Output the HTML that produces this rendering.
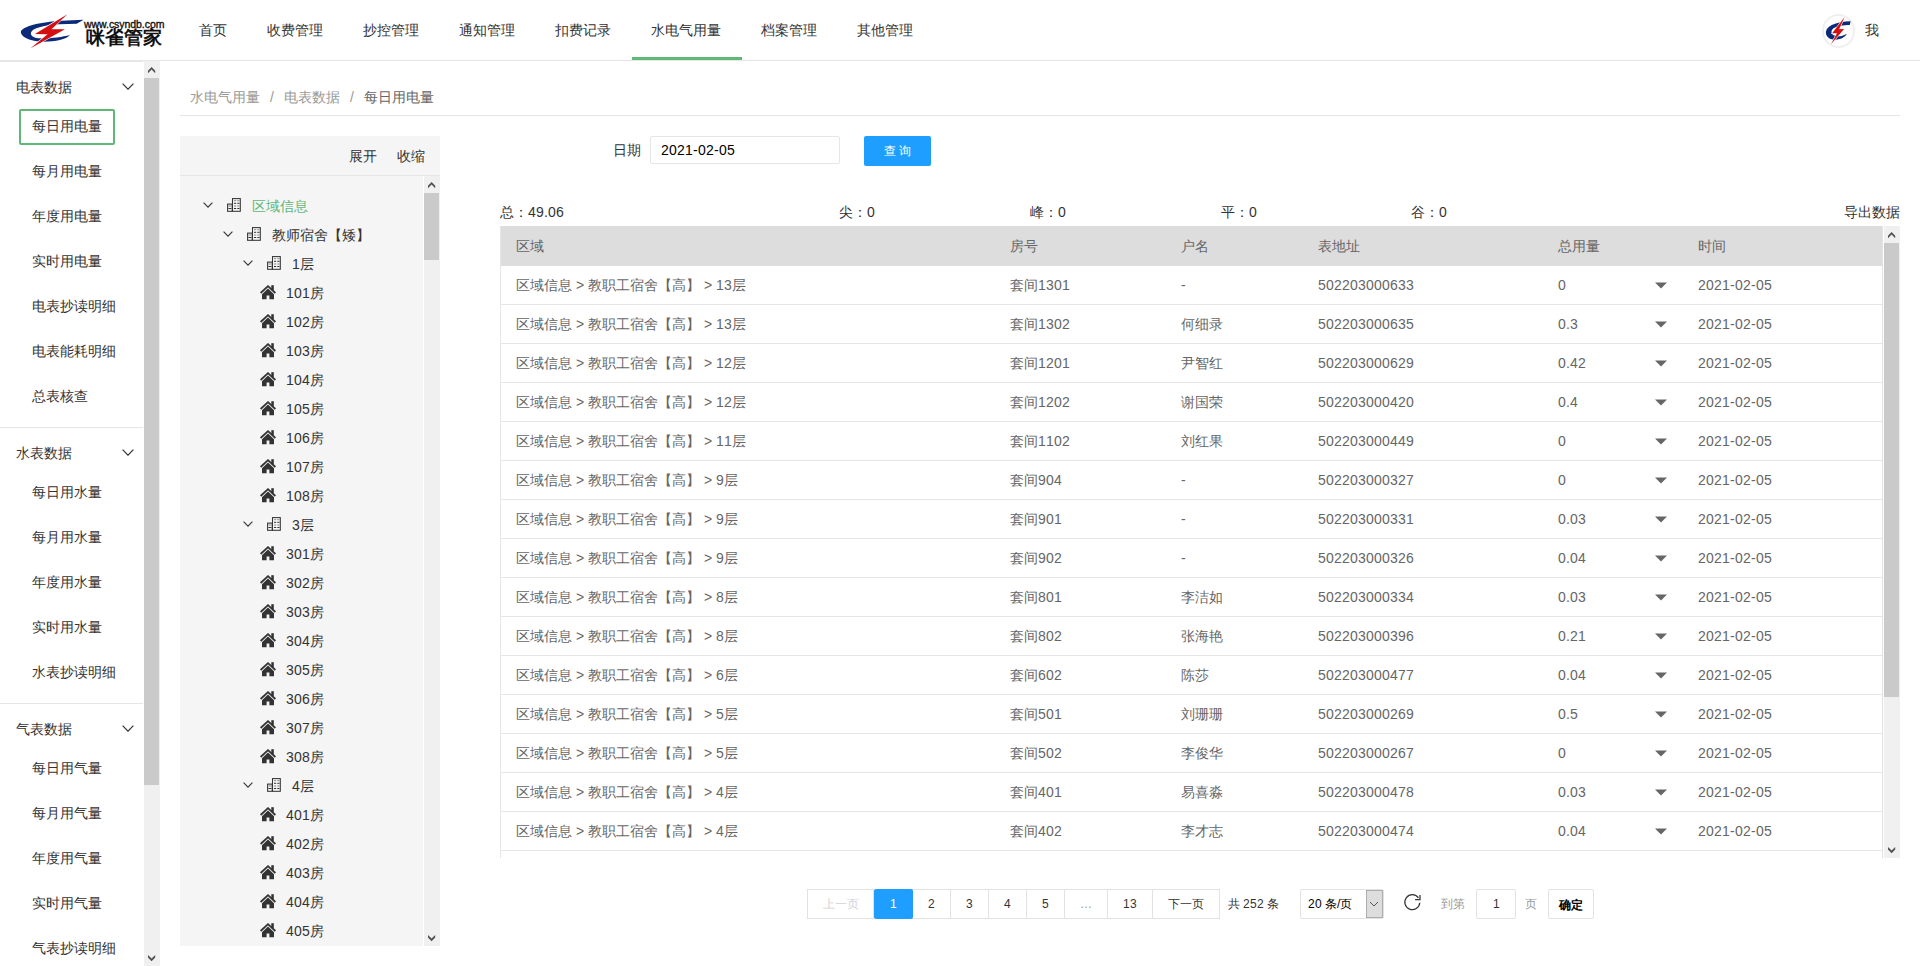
<!DOCTYPE html><html><head><meta charset="utf-8"><title>每日用电量</title><style>
*{margin:0;padding:0;box-sizing:border-box}
html,body{width:1920px;height:966px;overflow:hidden;background:#fff;font-family:"Liberation Sans",sans-serif;font-size:14px;color:#333}
.abs{position:absolute}
.t{position:absolute;white-space:nowrap;line-height:20px;height:20px}
.t i{font-style:normal;display:inline-block;text-align:left}
.t i.k{width:1em;text-align:center}
.sb{position:absolute;background:#f0f0f0}
.thumb{position:absolute;background:#cacaca}
.hl{position:absolute;height:1px;background:#e6e6e6}
.pg{position:absolute;top:889px;height:30px;border:1px solid #e2e2e2;background:#fff}
</style></head><body>
<svg class="abs" style="left:18px;top:10px" width="70" height="42" viewBox="0 0 1610 966">
<path d="M1510 222 L1000 245 C600 268 150 350 72 480 C30 600 250 722 560 728 C850 732 1100 680 1198 575 C1000 625 700 665 470 652 C260 625 235 495 420 420 C600 355 800 335 950 330 L1350 318 Z" fill="#0b2a7a"/>
<path d="M1135 95 L770 440 L1080 440 L290 880 L680 558 L390 552 Z" fill="#d40f12" stroke="#fff" stroke-width="28"/>
<path d="M1135 95 L770 440 L1080 440 L290 880 L680 558 L390 552 Z" fill="#d40f12"/>
</svg>
<div class="t" style="left:84px;top:18px;font-size:10.5px;line-height:12px;height:12px;color:#111;letter-spacing:-0.05px;-webkit-text-stroke:0.35px #111">www.csyndb.com</div>
<div class=t style="left:86px;top:27px;font-size:19px;line-height:22px;height:22px;color:#111;font-weight:bold"><i class=k>咪</i><i class=k>雀</i><i class=k>管</i><i class=k>家</i></div>
<div class=t style="left:199px;top:20px"><i class=k>首</i><i class=k>页</i></div>
<div class=t style="left:267px;top:20px"><i class=k>收</i><i class=k>费</i><i class=k>管</i><i class=k>理</i></div>
<div class=t style="left:363px;top:20px"><i class=k>抄</i><i class=k>控</i><i class=k>管</i><i class=k>理</i></div>
<div class=t style="left:459px;top:20px"><i class=k>通</i><i class=k>知</i><i class=k>管</i><i class=k>理</i></div>
<div class=t style="left:555px;top:20px"><i class=k>扣</i><i class=k>费</i><i class=k>记</i><i class=k>录</i></div>
<div class=t style="left:651px;top:20px"><i class=k>水</i><i class=k>电</i><i class=k>气</i><i class=k>用</i><i class=k>量</i></div>
<div class=t style="left:761px;top:20px"><i class=k>档</i><i class=k>案</i><i class=k>管</i><i class=k>理</i></div>
<div class=t style="left:857px;top:20px"><i class=k>其</i><i class=k>他</i><i class=k>管</i><i class=k>理</i></div>
<div class="abs" style="left:632px;top:57px;width:110px;height:3px;background:#5FB878"></div>
<div class="hl" style="left:0;top:60px;width:1920px"></div>
<div class="abs" style="left:1821.6px;top:14.3px;width:33px;height:33.4px;border-radius:50%;border:2px solid #efefef;background:#fff"></div>
<svg class="abs" style="left:1810px;top:5px" width="90" height="50" viewBox="0 0 1739 966">
<path d="M785 312 C650 316 520 340 420 388 C285 452 275 585 370 642 C455 692 625 682 708 572 L700 558 C630 603 545 613 485 596 C405 572 392 498 455 448 C528 398 650 388 768 384 Z" fill="#0b2a7a"/>
<path d="M670 232 L562 468 L658 462 L405 758 L522 548 L428 548 Z" fill="#d40f12" stroke="#fff" stroke-width="22"/>
<path d="M670 232 L562 468 L658 462 L405 758 L522 548 L428 548 Z" fill="#d40f12"/>
</svg>
<div class=t style="left:1865px;top:20px"><i class=k>我</i></div>
<div class=t style="left:16px;top:77px"><i class=k>电</i><i class=k>表</i><i class=k>数</i><i class=k>据</i></div>
<svg class="abs" style="left:122px;top:83px" width="12" height="7" viewBox="0 0 12 7"><path d="M0.6 0.6 L6.0 6.2 L11.4 0.6" fill="none" stroke="#333" stroke-width="1.2"/></svg>
<div class=t style="left:32px;top:116px"><i class=k>每</i><i class=k>日</i><i class=k>用</i><i class=k>电</i><i class=k>量</i></div>
<div class=t style="left:32px;top:161px"><i class=k>每</i><i class=k>月</i><i class=k>用</i><i class=k>电</i><i class=k>量</i></div>
<div class=t style="left:32px;top:206px"><i class=k>年</i><i class=k>度</i><i class=k>用</i><i class=k>电</i><i class=k>量</i></div>
<div class=t style="left:32px;top:251px"><i class=k>实</i><i class=k>时</i><i class=k>用</i><i class=k>电</i><i class=k>量</i></div>
<div class=t style="left:32px;top:296px"><i class=k>电</i><i class=k>表</i><i class=k>抄</i><i class=k>读</i><i class=k>明</i><i class=k>细</i></div>
<div class=t style="left:32px;top:341px"><i class=k>电</i><i class=k>表</i><i class=k>能</i><i class=k>耗</i><i class=k>明</i><i class=k>细</i></div>
<div class=t style="left:32px;top:386px"><i class=k>总</i><i class=k>表</i><i class=k>核</i><i class=k>查</i></div>
<div class=t style="left:16px;top:443px"><i class=k>水</i><i class=k>表</i><i class=k>数</i><i class=k>据</i></div>
<svg class="abs" style="left:122px;top:449px" width="12" height="7" viewBox="0 0 12 7"><path d="M0.6 0.6 L6.0 6.2 L11.4 0.6" fill="none" stroke="#333" stroke-width="1.2"/></svg>
<div class=t style="left:32px;top:482px"><i class=k>每</i><i class=k>日</i><i class=k>用</i><i class=k>水</i><i class=k>量</i></div>
<div class=t style="left:32px;top:527px"><i class=k>每</i><i class=k>月</i><i class=k>用</i><i class=k>水</i><i class=k>量</i></div>
<div class=t style="left:32px;top:572px"><i class=k>年</i><i class=k>度</i><i class=k>用</i><i class=k>水</i><i class=k>量</i></div>
<div class=t style="left:32px;top:617px"><i class=k>实</i><i class=k>时</i><i class=k>用</i><i class=k>水</i><i class=k>量</i></div>
<div class=t style="left:32px;top:662px"><i class=k>水</i><i class=k>表</i><i class=k>抄</i><i class=k>读</i><i class=k>明</i><i class=k>细</i></div>
<div class=t style="left:16px;top:719px"><i class=k>气</i><i class=k>表</i><i class=k>数</i><i class=k>据</i></div>
<svg class="abs" style="left:122px;top:725px" width="12" height="7" viewBox="0 0 12 7"><path d="M0.6 0.6 L6.0 6.2 L11.4 0.6" fill="none" stroke="#333" stroke-width="1.2"/></svg>
<div class=t style="left:32px;top:758px"><i class=k>每</i><i class=k>日</i><i class=k>用</i><i class=k>气</i><i class=k>量</i></div>
<div class=t style="left:32px;top:803px"><i class=k>每</i><i class=k>月</i><i class=k>用</i><i class=k>气</i><i class=k>量</i></div>
<div class=t style="left:32px;top:848px"><i class=k>年</i><i class=k>度</i><i class=k>用</i><i class=k>气</i><i class=k>量</i></div>
<div class=t style="left:32px;top:893px"><i class=k>实</i><i class=k>时</i><i class=k>用</i><i class=k>气</i><i class=k>量</i></div>
<div class=t style="left:32px;top:938px"><i class=k>气</i><i class=k>表</i><i class=k>抄</i><i class=k>读</i><i class=k>明</i><i class=k>细</i></div>
<div class="hl" style="left:0;top:427px;width:143px"></div>
<div class="hl" style="left:0;top:703px;width:143px"></div>
<div class="abs" style="left:19px;top:109px;width:96px;height:36px;border:2px solid #5FB878;border-radius:2px"></div>
<div class="sb" style="left:144px;top:61px;width:16px;height:905px"></div>
<div class="thumb" style="left:144px;top:78px;width:15px;height:707px"></div>
<svg class="abs" style="left:147.8px;top:66.8px" width="8" height="7" viewBox="0 0 8 7"><path d="M0 3.7 L3.6 0 L7.2 3.7 L7.2 6.2 L3.6 2.6 L0 6.2 Z" fill="#505050"/></svg>
<svg class="abs" style="left:147.6px;top:955.2px" width="8" height="7" viewBox="0 0 8 7"><path d="M0 0 L3.6 3.6 L7.2 0 L7.2 2.5 L3.6 6.2 L0 2.5 Z" fill="#505050"/></svg>
<div class="hl" style="left:0;top:61px;width:143px"></div>
<div class=t style="left:190px;top:87px;color:#999"><i class=k>水</i><i class=k>电</i><i class=k>气</i><i class=k>用</i><i class=k>量</i></div>
<div class=t style="left:270px;top:87px;color:#999"><i style="width:4px">/</i></div>
<div class=t style="left:284px;top:87px;color:#999"><i class=k>电</i><i class=k>表</i><i class=k>数</i><i class=k>据</i></div>
<div class=t style="left:350px;top:87px;color:#999"><i style="width:4px">/</i></div>
<div class=t style="left:364px;top:87px;color:#666"><i class=k>每</i><i class=k>日</i><i class=k>用</i><i class=k>电</i><i class=k>量</i></div>
<div class="hl" style="left:180px;top:115px;width:1720px"></div>
<div class="abs" style="left:180px;top:136px;width:260px;height:810px;background:#f5f5f5"></div>
<div class=t style="left:349px;top:146px"><i class=k>展</i><i class=k>开</i></div>
<div class=t style="left:397px;top:146px"><i class=k>收</i><i class=k>缩</i></div>
<div class="hl" style="left:180px;top:175px;width:260px"></div>
<div class="sb" style="left:424px;top:176px;width:16px;height:770px"></div>
<div class="abs" style="left:423px;top:176px;width:1px;height:770px;background:#fff"></div>
<div class="thumb" style="left:424px;top:193px;width:15px;height:67px"></div>
<svg class="abs" style="left:427.8px;top:181.8px" width="8" height="7" viewBox="0 0 8 7"><path d="M0 3.7 L3.6 0 L7.2 3.7 L7.2 6.2 L3.6 2.6 L0 6.2 Z" fill="#505050"/></svg>
<svg class="abs" style="left:427.6px;top:935.2px" width="8" height="7" viewBox="0 0 8 7"><path d="M0 0 L3.6 3.6 L7.2 0 L7.2 2.5 L3.6 6.2 L0 2.5 Z" fill="#505050"/></svg>
<svg class="abs" style="left:203px;top:202px" width="10" height="6" viewBox="0 0 10 6"><path d="M0.6 0.6 L5.0 5.2 L9.4 0.6" fill="none" stroke="#333" stroke-width="1.1"/></svg>
<svg class="abs" style="left:227px;top:198px" width="15" height="15" viewBox="0 0 15 15"><g fill="none" stroke="#333" stroke-width="1.05"><rect x="0.6" y="6.1" width="4.6" height="7.2"/><rect x="5.5" y="0.6" width="7.8" height="12.7"/></g><g stroke="#333" stroke-width="1"><path d="M7 5.3 h2.2 M10.3 5.3 h2.2 M7 10.5 h2.2 M10.3 10.5 h2.2 M1.4 10.5 h3"/></g><g stroke="#8a8a8a" stroke-width="1"><path d="M7 2.7 h2.2 M10.3 2.7 h2.2 M7 8 h2.2 M10.3 8 h2.2 M1.4 8 h3"/></g></svg>
<div class=t style="left:252px;top:196px;color:#5FB878"><i class=k>区</i><i class=k>域</i><i class=k>信</i><i class=k>息</i></div>
<svg class="abs" style="left:223px;top:231px" width="10" height="6" viewBox="0 0 10 6"><path d="M0.6 0.6 L5.0 5.2 L9.4 0.6" fill="none" stroke="#333" stroke-width="1.1"/></svg>
<svg class="abs" style="left:247px;top:227px" width="15" height="15" viewBox="0 0 15 15"><g fill="none" stroke="#333" stroke-width="1.05"><rect x="0.6" y="6.1" width="4.6" height="7.2"/><rect x="5.5" y="0.6" width="7.8" height="12.7"/></g><g stroke="#333" stroke-width="1"><path d="M7 5.3 h2.2 M10.3 5.3 h2.2 M7 10.5 h2.2 M10.3 10.5 h2.2 M1.4 10.5 h3"/></g><g stroke="#8a8a8a" stroke-width="1"><path d="M7 2.7 h2.2 M10.3 2.7 h2.2 M7 8 h2.2 M10.3 8 h2.2 M1.4 8 h3"/></g></svg>
<div class=t style="left:272px;top:225px"><i class=k>教</i><i class=k>师</i><i class=k>宿</i><i class=k>舍</i><i class=k>【</i><i class=k>矮</i><i class=k>】</i></div>
<svg class="abs" style="left:243px;top:260px" width="10" height="6" viewBox="0 0 10 6"><path d="M0.6 0.6 L5.0 5.2 L9.4 0.6" fill="none" stroke="#333" stroke-width="1.1"/></svg>
<svg class="abs" style="left:267px;top:256px" width="15" height="15" viewBox="0 0 15 15"><g fill="none" stroke="#333" stroke-width="1.05"><rect x="0.6" y="6.1" width="4.6" height="7.2"/><rect x="5.5" y="0.6" width="7.8" height="12.7"/></g><g stroke="#333" stroke-width="1"><path d="M7 5.3 h2.2 M10.3 5.3 h2.2 M7 10.5 h2.2 M10.3 10.5 h2.2 M1.4 10.5 h3"/></g><g stroke="#8a8a8a" stroke-width="1"><path d="M7 2.7 h2.2 M10.3 2.7 h2.2 M7 8 h2.2 M10.3 8 h2.2 M1.4 8 h3"/></g></svg>
<div class=t style="left:292px;top:254px"><i style="width:8px">1</i><i class=k>层</i></div>
<svg class="abs" style="left:260px;top:285px" width="16" height="15" viewBox="0 0 16 15"><path d="M0.6 8 L8 1.2 L15.4 8" fill="none" stroke="#333" stroke-width="1.8"/><rect x="11.3" y="0.2" width="2.5" height="5" fill="#333"/><path d="M2 9.2 L8 3.6 L14 9.2 L14 14.2 L9.4 14.2 L9.4 10.5 L6.6 10.5 L6.6 14.2 L2 14.2 Z" fill="#333"/></svg>
<div class=t style="left:286px;top:283px"><i style="width:8px">1</i><i style="width:8px">0</i><i style="width:8px">1</i><i class=k>房</i></div>
<svg class="abs" style="left:260px;top:314px" width="16" height="15" viewBox="0 0 16 15"><path d="M0.6 8 L8 1.2 L15.4 8" fill="none" stroke="#333" stroke-width="1.8"/><rect x="11.3" y="0.2" width="2.5" height="5" fill="#333"/><path d="M2 9.2 L8 3.6 L14 9.2 L14 14.2 L9.4 14.2 L9.4 10.5 L6.6 10.5 L6.6 14.2 L2 14.2 Z" fill="#333"/></svg>
<div class=t style="left:286px;top:312px"><i style="width:8px">1</i><i style="width:8px">0</i><i style="width:8px">2</i><i class=k>房</i></div>
<svg class="abs" style="left:260px;top:343px" width="16" height="15" viewBox="0 0 16 15"><path d="M0.6 8 L8 1.2 L15.4 8" fill="none" stroke="#333" stroke-width="1.8"/><rect x="11.3" y="0.2" width="2.5" height="5" fill="#333"/><path d="M2 9.2 L8 3.6 L14 9.2 L14 14.2 L9.4 14.2 L9.4 10.5 L6.6 10.5 L6.6 14.2 L2 14.2 Z" fill="#333"/></svg>
<div class=t style="left:286px;top:341px"><i style="width:8px">1</i><i style="width:8px">0</i><i style="width:8px">3</i><i class=k>房</i></div>
<svg class="abs" style="left:260px;top:372px" width="16" height="15" viewBox="0 0 16 15"><path d="M0.6 8 L8 1.2 L15.4 8" fill="none" stroke="#333" stroke-width="1.8"/><rect x="11.3" y="0.2" width="2.5" height="5" fill="#333"/><path d="M2 9.2 L8 3.6 L14 9.2 L14 14.2 L9.4 14.2 L9.4 10.5 L6.6 10.5 L6.6 14.2 L2 14.2 Z" fill="#333"/></svg>
<div class=t style="left:286px;top:370px"><i style="width:8px">1</i><i style="width:8px">0</i><i style="width:8px">4</i><i class=k>房</i></div>
<svg class="abs" style="left:260px;top:401px" width="16" height="15" viewBox="0 0 16 15"><path d="M0.6 8 L8 1.2 L15.4 8" fill="none" stroke="#333" stroke-width="1.8"/><rect x="11.3" y="0.2" width="2.5" height="5" fill="#333"/><path d="M2 9.2 L8 3.6 L14 9.2 L14 14.2 L9.4 14.2 L9.4 10.5 L6.6 10.5 L6.6 14.2 L2 14.2 Z" fill="#333"/></svg>
<div class=t style="left:286px;top:399px"><i style="width:8px">1</i><i style="width:8px">0</i><i style="width:8px">5</i><i class=k>房</i></div>
<svg class="abs" style="left:260px;top:430px" width="16" height="15" viewBox="0 0 16 15"><path d="M0.6 8 L8 1.2 L15.4 8" fill="none" stroke="#333" stroke-width="1.8"/><rect x="11.3" y="0.2" width="2.5" height="5" fill="#333"/><path d="M2 9.2 L8 3.6 L14 9.2 L14 14.2 L9.4 14.2 L9.4 10.5 L6.6 10.5 L6.6 14.2 L2 14.2 Z" fill="#333"/></svg>
<div class=t style="left:286px;top:428px"><i style="width:8px">1</i><i style="width:8px">0</i><i style="width:8px">6</i><i class=k>房</i></div>
<svg class="abs" style="left:260px;top:459px" width="16" height="15" viewBox="0 0 16 15"><path d="M0.6 8 L8 1.2 L15.4 8" fill="none" stroke="#333" stroke-width="1.8"/><rect x="11.3" y="0.2" width="2.5" height="5" fill="#333"/><path d="M2 9.2 L8 3.6 L14 9.2 L14 14.2 L9.4 14.2 L9.4 10.5 L6.6 10.5 L6.6 14.2 L2 14.2 Z" fill="#333"/></svg>
<div class=t style="left:286px;top:457px"><i style="width:8px">1</i><i style="width:8px">0</i><i style="width:8px">7</i><i class=k>房</i></div>
<svg class="abs" style="left:260px;top:488px" width="16" height="15" viewBox="0 0 16 15"><path d="M0.6 8 L8 1.2 L15.4 8" fill="none" stroke="#333" stroke-width="1.8"/><rect x="11.3" y="0.2" width="2.5" height="5" fill="#333"/><path d="M2 9.2 L8 3.6 L14 9.2 L14 14.2 L9.4 14.2 L9.4 10.5 L6.6 10.5 L6.6 14.2 L2 14.2 Z" fill="#333"/></svg>
<div class=t style="left:286px;top:486px"><i style="width:8px">1</i><i style="width:8px">0</i><i style="width:8px">8</i><i class=k>房</i></div>
<svg class="abs" style="left:243px;top:521px" width="10" height="6" viewBox="0 0 10 6"><path d="M0.6 0.6 L5.0 5.2 L9.4 0.6" fill="none" stroke="#333" stroke-width="1.1"/></svg>
<svg class="abs" style="left:267px;top:517px" width="15" height="15" viewBox="0 0 15 15"><g fill="none" stroke="#333" stroke-width="1.05"><rect x="0.6" y="6.1" width="4.6" height="7.2"/><rect x="5.5" y="0.6" width="7.8" height="12.7"/></g><g stroke="#333" stroke-width="1"><path d="M7 5.3 h2.2 M10.3 5.3 h2.2 M7 10.5 h2.2 M10.3 10.5 h2.2 M1.4 10.5 h3"/></g><g stroke="#8a8a8a" stroke-width="1"><path d="M7 2.7 h2.2 M10.3 2.7 h2.2 M7 8 h2.2 M10.3 8 h2.2 M1.4 8 h3"/></g></svg>
<div class=t style="left:292px;top:515px"><i style="width:8px">3</i><i class=k>层</i></div>
<svg class="abs" style="left:260px;top:546px" width="16" height="15" viewBox="0 0 16 15"><path d="M0.6 8 L8 1.2 L15.4 8" fill="none" stroke="#333" stroke-width="1.8"/><rect x="11.3" y="0.2" width="2.5" height="5" fill="#333"/><path d="M2 9.2 L8 3.6 L14 9.2 L14 14.2 L9.4 14.2 L9.4 10.5 L6.6 10.5 L6.6 14.2 L2 14.2 Z" fill="#333"/></svg>
<div class=t style="left:286px;top:544px"><i style="width:8px">3</i><i style="width:8px">0</i><i style="width:8px">1</i><i class=k>房</i></div>
<svg class="abs" style="left:260px;top:575px" width="16" height="15" viewBox="0 0 16 15"><path d="M0.6 8 L8 1.2 L15.4 8" fill="none" stroke="#333" stroke-width="1.8"/><rect x="11.3" y="0.2" width="2.5" height="5" fill="#333"/><path d="M2 9.2 L8 3.6 L14 9.2 L14 14.2 L9.4 14.2 L9.4 10.5 L6.6 10.5 L6.6 14.2 L2 14.2 Z" fill="#333"/></svg>
<div class=t style="left:286px;top:573px"><i style="width:8px">3</i><i style="width:8px">0</i><i style="width:8px">2</i><i class=k>房</i></div>
<svg class="abs" style="left:260px;top:604px" width="16" height="15" viewBox="0 0 16 15"><path d="M0.6 8 L8 1.2 L15.4 8" fill="none" stroke="#333" stroke-width="1.8"/><rect x="11.3" y="0.2" width="2.5" height="5" fill="#333"/><path d="M2 9.2 L8 3.6 L14 9.2 L14 14.2 L9.4 14.2 L9.4 10.5 L6.6 10.5 L6.6 14.2 L2 14.2 Z" fill="#333"/></svg>
<div class=t style="left:286px;top:602px"><i style="width:8px">3</i><i style="width:8px">0</i><i style="width:8px">3</i><i class=k>房</i></div>
<svg class="abs" style="left:260px;top:633px" width="16" height="15" viewBox="0 0 16 15"><path d="M0.6 8 L8 1.2 L15.4 8" fill="none" stroke="#333" stroke-width="1.8"/><rect x="11.3" y="0.2" width="2.5" height="5" fill="#333"/><path d="M2 9.2 L8 3.6 L14 9.2 L14 14.2 L9.4 14.2 L9.4 10.5 L6.6 10.5 L6.6 14.2 L2 14.2 Z" fill="#333"/></svg>
<div class=t style="left:286px;top:631px"><i style="width:8px">3</i><i style="width:8px">0</i><i style="width:8px">4</i><i class=k>房</i></div>
<svg class="abs" style="left:260px;top:662px" width="16" height="15" viewBox="0 0 16 15"><path d="M0.6 8 L8 1.2 L15.4 8" fill="none" stroke="#333" stroke-width="1.8"/><rect x="11.3" y="0.2" width="2.5" height="5" fill="#333"/><path d="M2 9.2 L8 3.6 L14 9.2 L14 14.2 L9.4 14.2 L9.4 10.5 L6.6 10.5 L6.6 14.2 L2 14.2 Z" fill="#333"/></svg>
<div class=t style="left:286px;top:660px"><i style="width:8px">3</i><i style="width:8px">0</i><i style="width:8px">5</i><i class=k>房</i></div>
<svg class="abs" style="left:260px;top:691px" width="16" height="15" viewBox="0 0 16 15"><path d="M0.6 8 L8 1.2 L15.4 8" fill="none" stroke="#333" stroke-width="1.8"/><rect x="11.3" y="0.2" width="2.5" height="5" fill="#333"/><path d="M2 9.2 L8 3.6 L14 9.2 L14 14.2 L9.4 14.2 L9.4 10.5 L6.6 10.5 L6.6 14.2 L2 14.2 Z" fill="#333"/></svg>
<div class=t style="left:286px;top:689px"><i style="width:8px">3</i><i style="width:8px">0</i><i style="width:8px">6</i><i class=k>房</i></div>
<svg class="abs" style="left:260px;top:720px" width="16" height="15" viewBox="0 0 16 15"><path d="M0.6 8 L8 1.2 L15.4 8" fill="none" stroke="#333" stroke-width="1.8"/><rect x="11.3" y="0.2" width="2.5" height="5" fill="#333"/><path d="M2 9.2 L8 3.6 L14 9.2 L14 14.2 L9.4 14.2 L9.4 10.5 L6.6 10.5 L6.6 14.2 L2 14.2 Z" fill="#333"/></svg>
<div class=t style="left:286px;top:718px"><i style="width:8px">3</i><i style="width:8px">0</i><i style="width:8px">7</i><i class=k>房</i></div>
<svg class="abs" style="left:260px;top:749px" width="16" height="15" viewBox="0 0 16 15"><path d="M0.6 8 L8 1.2 L15.4 8" fill="none" stroke="#333" stroke-width="1.8"/><rect x="11.3" y="0.2" width="2.5" height="5" fill="#333"/><path d="M2 9.2 L8 3.6 L14 9.2 L14 14.2 L9.4 14.2 L9.4 10.5 L6.6 10.5 L6.6 14.2 L2 14.2 Z" fill="#333"/></svg>
<div class=t style="left:286px;top:747px"><i style="width:8px">3</i><i style="width:8px">0</i><i style="width:8px">8</i><i class=k>房</i></div>
<svg class="abs" style="left:243px;top:782px" width="10" height="6" viewBox="0 0 10 6"><path d="M0.6 0.6 L5.0 5.2 L9.4 0.6" fill="none" stroke="#333" stroke-width="1.1"/></svg>
<svg class="abs" style="left:267px;top:778px" width="15" height="15" viewBox="0 0 15 15"><g fill="none" stroke="#333" stroke-width="1.05"><rect x="0.6" y="6.1" width="4.6" height="7.2"/><rect x="5.5" y="0.6" width="7.8" height="12.7"/></g><g stroke="#333" stroke-width="1"><path d="M7 5.3 h2.2 M10.3 5.3 h2.2 M7 10.5 h2.2 M10.3 10.5 h2.2 M1.4 10.5 h3"/></g><g stroke="#8a8a8a" stroke-width="1"><path d="M7 2.7 h2.2 M10.3 2.7 h2.2 M7 8 h2.2 M10.3 8 h2.2 M1.4 8 h3"/></g></svg>
<div class=t style="left:292px;top:776px"><i style="width:8px">4</i><i class=k>层</i></div>
<svg class="abs" style="left:260px;top:807px" width="16" height="15" viewBox="0 0 16 15"><path d="M0.6 8 L8 1.2 L15.4 8" fill="none" stroke="#333" stroke-width="1.8"/><rect x="11.3" y="0.2" width="2.5" height="5" fill="#333"/><path d="M2 9.2 L8 3.6 L14 9.2 L14 14.2 L9.4 14.2 L9.4 10.5 L6.6 10.5 L6.6 14.2 L2 14.2 Z" fill="#333"/></svg>
<div class=t style="left:286px;top:805px"><i style="width:8px">4</i><i style="width:8px">0</i><i style="width:8px">1</i><i class=k>房</i></div>
<svg class="abs" style="left:260px;top:836px" width="16" height="15" viewBox="0 0 16 15"><path d="M0.6 8 L8 1.2 L15.4 8" fill="none" stroke="#333" stroke-width="1.8"/><rect x="11.3" y="0.2" width="2.5" height="5" fill="#333"/><path d="M2 9.2 L8 3.6 L14 9.2 L14 14.2 L9.4 14.2 L9.4 10.5 L6.6 10.5 L6.6 14.2 L2 14.2 Z" fill="#333"/></svg>
<div class=t style="left:286px;top:834px"><i style="width:8px">4</i><i style="width:8px">0</i><i style="width:8px">2</i><i class=k>房</i></div>
<svg class="abs" style="left:260px;top:865px" width="16" height="15" viewBox="0 0 16 15"><path d="M0.6 8 L8 1.2 L15.4 8" fill="none" stroke="#333" stroke-width="1.8"/><rect x="11.3" y="0.2" width="2.5" height="5" fill="#333"/><path d="M2 9.2 L8 3.6 L14 9.2 L14 14.2 L9.4 14.2 L9.4 10.5 L6.6 10.5 L6.6 14.2 L2 14.2 Z" fill="#333"/></svg>
<div class=t style="left:286px;top:863px"><i style="width:8px">4</i><i style="width:8px">0</i><i style="width:8px">3</i><i class=k>房</i></div>
<svg class="abs" style="left:260px;top:894px" width="16" height="15" viewBox="0 0 16 15"><path d="M0.6 8 L8 1.2 L15.4 8" fill="none" stroke="#333" stroke-width="1.8"/><rect x="11.3" y="0.2" width="2.5" height="5" fill="#333"/><path d="M2 9.2 L8 3.6 L14 9.2 L14 14.2 L9.4 14.2 L9.4 10.5 L6.6 10.5 L6.6 14.2 L2 14.2 Z" fill="#333"/></svg>
<div class=t style="left:286px;top:892px"><i style="width:8px">4</i><i style="width:8px">0</i><i style="width:8px">4</i><i class=k>房</i></div>
<svg class="abs" style="left:260px;top:923px" width="16" height="15" viewBox="0 0 16 15"><path d="M0.6 8 L8 1.2 L15.4 8" fill="none" stroke="#333" stroke-width="1.8"/><rect x="11.3" y="0.2" width="2.5" height="5" fill="#333"/><path d="M2 9.2 L8 3.6 L14 9.2 L14 14.2 L9.4 14.2 L9.4 10.5 L6.6 10.5 L6.6 14.2 L2 14.2 Z" fill="#333"/></svg>
<div class=t style="left:286px;top:921px"><i style="width:8px">4</i><i style="width:8px">0</i><i style="width:8px">5</i><i class=k>房</i></div>
<div class=t style="left:613px;top:140px"><i class=k>日</i><i class=k>期</i></div>
<div class="abs" style="left:650px;top:136px;width:190px;height:28px;border:1px solid #e6e6e6;border-radius:2px;background:#fff"></div>
<div class=t style="left:661px;top:140px;color:#000"><i style="width:8px">2</i><i style="width:8px">0</i><i style="width:8px">2</i><i style="width:8px">1</i><i style="width:5px">-</i><i style="width:8px">0</i><i style="width:8px">2</i><i style="width:5px">-</i><i style="width:8px">0</i><i style="width:8px">5</i></div>
<div class="abs" style="left:864px;top:136px;width:67px;height:30px;background:#1E9FFF;border-radius:2px"></div>
<div class=t style="left:884px;top:141px;font-size:12px;color:#fff"><i class=k>查</i><i style="width:3px">&nbsp;</i><i class=k>询</i></div>
<div class=t style="left:500px;top:202px"><i class=k>总</i><i class=k>：</i><i style="width:8px">4</i><i style="width:8px">9</i><i style="width:4px">.</i><i style="width:8px">0</i><i style="width:8px">6</i></div>
<div class=t style="left:839px;top:202px"><i class=k>尖</i><i class=k>：</i><i style="width:8px">0</i></div>
<div class=t style="left:1030px;top:202px"><i class=k>峰</i><i class=k>：</i><i style="width:8px">0</i></div>
<div class=t style="left:1221px;top:202px"><i class=k>平</i><i class=k>：</i><i style="width:8px">0</i></div>
<div class=t style="left:1411px;top:202px"><i class=k>谷</i><i class=k>：</i><i style="width:8px">0</i></div>
<div class=t style="left:1844px;top:202px"><i class=k>导</i><i class=k>出</i><i class=k>数</i><i class=k>据</i></div>
<div class="abs" style="left:500px;top:226px;width:1400px;height:632px;overflow:hidden">
<div class="abs" style="left:0;top:0;width:1383px;height:40px;background:#dddddd"></div>
<div class=t style="left:16px;top:10px;color:#666"><i class=k>区</i><i class=k>域</i></div>
<div class=t style="left:510px;top:10px;color:#666"><i class=k>房</i><i class=k>号</i></div>
<div class=t style="left:681px;top:10px;color:#666"><i class=k>户</i><i class=k>名</i></div>
<div class=t style="left:818px;top:10px;color:#666"><i class=k>表</i><i class=k>地</i><i class=k>址</i></div>
<div class=t style="left:1058px;top:10px;color:#666"><i class=k>总</i><i class=k>用</i><i class=k>量</i></div>
<div class=t style="left:1198px;top:10px;color:#666"><i class=k>时</i><i class=k>间</i></div>
<div class="abs" style="left:0;top:78px;width:1383px;height:1px;background:#e6e6e6"></div>
<div class=t style="left:16px;top:49px;color:#666"><i class=k>区</i><i class=k>域</i><i class=k>信</i><i class=k>息</i><i style="width:4px">&nbsp;</i><i style="width:8px">&gt;</i><i style="width:4px">&nbsp;</i><i class=k>教</i><i class=k>职</i><i class=k>工</i><i class=k>宿</i><i class=k>舍</i><i class=k>【</i><i class=k>高</i><i class=k>】</i><i style="width:4px">&nbsp;</i><i style="width:8px">&gt;</i><i style="width:4px">&nbsp;</i><i style="width:8px">1</i><i style="width:8px">3</i><i class=k>层</i></div>
<div class=t style="left:510px;top:49px;color:#666"><i class=k>套</i><i class=k>间</i><i style="width:8px">1</i><i style="width:8px">3</i><i style="width:8px">0</i><i style="width:8px">1</i></div>
<div class=t style="left:681px;top:49px;color:#666"><i style="width:5px">-</i></div>
<div class=t style="left:818px;top:49px;color:#666"><i style="width:8px">5</i><i style="width:8px">0</i><i style="width:8px">2</i><i style="width:8px">2</i><i style="width:8px">0</i><i style="width:8px">3</i><i style="width:8px">0</i><i style="width:8px">0</i><i style="width:8px">0</i><i style="width:8px">6</i><i style="width:8px">3</i><i style="width:8px">3</i></div>
<div class=t style="left:1058px;top:49px;color:#666"><i style="width:8px">0</i></div>
<svg class="abs" style="left:1155px;top:56px" width="12" height="7" viewBox="0 0 12 7"><path d="M0 0.5 L12 0.5 L6 6.5 Z" fill="#666"/></svg>
<div class=t style="left:1198px;top:49px;color:#666"><i style="width:8px">2</i><i style="width:8px">0</i><i style="width:8px">2</i><i style="width:8px">1</i><i style="width:5px">-</i><i style="width:8px">0</i><i style="width:8px">2</i><i style="width:5px">-</i><i style="width:8px">0</i><i style="width:8px">5</i></div>
<div class="abs" style="left:0;top:117px;width:1383px;height:1px;background:#e6e6e6"></div>
<div class=t style="left:16px;top:88px;color:#666"><i class=k>区</i><i class=k>域</i><i class=k>信</i><i class=k>息</i><i style="width:4px">&nbsp;</i><i style="width:8px">&gt;</i><i style="width:4px">&nbsp;</i><i class=k>教</i><i class=k>职</i><i class=k>工</i><i class=k>宿</i><i class=k>舍</i><i class=k>【</i><i class=k>高</i><i class=k>】</i><i style="width:4px">&nbsp;</i><i style="width:8px">&gt;</i><i style="width:4px">&nbsp;</i><i style="width:8px">1</i><i style="width:8px">3</i><i class=k>层</i></div>
<div class=t style="left:510px;top:88px;color:#666"><i class=k>套</i><i class=k>间</i><i style="width:8px">1</i><i style="width:8px">3</i><i style="width:8px">0</i><i style="width:8px">2</i></div>
<div class=t style="left:681px;top:88px;color:#666"><i class=k>何</i><i class=k>细</i><i class=k>录</i></div>
<div class=t style="left:818px;top:88px;color:#666"><i style="width:8px">5</i><i style="width:8px">0</i><i style="width:8px">2</i><i style="width:8px">2</i><i style="width:8px">0</i><i style="width:8px">3</i><i style="width:8px">0</i><i style="width:8px">0</i><i style="width:8px">0</i><i style="width:8px">6</i><i style="width:8px">3</i><i style="width:8px">5</i></div>
<div class=t style="left:1058px;top:88px;color:#666"><i style="width:8px">0</i><i style="width:4px">.</i><i style="width:8px">3</i></div>
<svg class="abs" style="left:1155px;top:95px" width="12" height="7" viewBox="0 0 12 7"><path d="M0 0.5 L12 0.5 L6 6.5 Z" fill="#666"/></svg>
<div class=t style="left:1198px;top:88px;color:#666"><i style="width:8px">2</i><i style="width:8px">0</i><i style="width:8px">2</i><i style="width:8px">1</i><i style="width:5px">-</i><i style="width:8px">0</i><i style="width:8px">2</i><i style="width:5px">-</i><i style="width:8px">0</i><i style="width:8px">5</i></div>
<div class="abs" style="left:0;top:156px;width:1383px;height:1px;background:#e6e6e6"></div>
<div class=t style="left:16px;top:127px;color:#666"><i class=k>区</i><i class=k>域</i><i class=k>信</i><i class=k>息</i><i style="width:4px">&nbsp;</i><i style="width:8px">&gt;</i><i style="width:4px">&nbsp;</i><i class=k>教</i><i class=k>职</i><i class=k>工</i><i class=k>宿</i><i class=k>舍</i><i class=k>【</i><i class=k>高</i><i class=k>】</i><i style="width:4px">&nbsp;</i><i style="width:8px">&gt;</i><i style="width:4px">&nbsp;</i><i style="width:8px">1</i><i style="width:8px">2</i><i class=k>层</i></div>
<div class=t style="left:510px;top:127px;color:#666"><i class=k>套</i><i class=k>间</i><i style="width:8px">1</i><i style="width:8px">2</i><i style="width:8px">0</i><i style="width:8px">1</i></div>
<div class=t style="left:681px;top:127px;color:#666"><i class=k>尹</i><i class=k>智</i><i class=k>红</i></div>
<div class=t style="left:818px;top:127px;color:#666"><i style="width:8px">5</i><i style="width:8px">0</i><i style="width:8px">2</i><i style="width:8px">2</i><i style="width:8px">0</i><i style="width:8px">3</i><i style="width:8px">0</i><i style="width:8px">0</i><i style="width:8px">0</i><i style="width:8px">6</i><i style="width:8px">2</i><i style="width:8px">9</i></div>
<div class=t style="left:1058px;top:127px;color:#666"><i style="width:8px">0</i><i style="width:4px">.</i><i style="width:8px">4</i><i style="width:8px">2</i></div>
<svg class="abs" style="left:1155px;top:134px" width="12" height="7" viewBox="0 0 12 7"><path d="M0 0.5 L12 0.5 L6 6.5 Z" fill="#666"/></svg>
<div class=t style="left:1198px;top:127px;color:#666"><i style="width:8px">2</i><i style="width:8px">0</i><i style="width:8px">2</i><i style="width:8px">1</i><i style="width:5px">-</i><i style="width:8px">0</i><i style="width:8px">2</i><i style="width:5px">-</i><i style="width:8px">0</i><i style="width:8px">5</i></div>
<div class="abs" style="left:0;top:195px;width:1383px;height:1px;background:#e6e6e6"></div>
<div class=t style="left:16px;top:166px;color:#666"><i class=k>区</i><i class=k>域</i><i class=k>信</i><i class=k>息</i><i style="width:4px">&nbsp;</i><i style="width:8px">&gt;</i><i style="width:4px">&nbsp;</i><i class=k>教</i><i class=k>职</i><i class=k>工</i><i class=k>宿</i><i class=k>舍</i><i class=k>【</i><i class=k>高</i><i class=k>】</i><i style="width:4px">&nbsp;</i><i style="width:8px">&gt;</i><i style="width:4px">&nbsp;</i><i style="width:8px">1</i><i style="width:8px">2</i><i class=k>层</i></div>
<div class=t style="left:510px;top:166px;color:#666"><i class=k>套</i><i class=k>间</i><i style="width:8px">1</i><i style="width:8px">2</i><i style="width:8px">0</i><i style="width:8px">2</i></div>
<div class=t style="left:681px;top:166px;color:#666"><i class=k>谢</i><i class=k>国</i><i class=k>荣</i></div>
<div class=t style="left:818px;top:166px;color:#666"><i style="width:8px">5</i><i style="width:8px">0</i><i style="width:8px">2</i><i style="width:8px">2</i><i style="width:8px">0</i><i style="width:8px">3</i><i style="width:8px">0</i><i style="width:8px">0</i><i style="width:8px">0</i><i style="width:8px">4</i><i style="width:8px">2</i><i style="width:8px">0</i></div>
<div class=t style="left:1058px;top:166px;color:#666"><i style="width:8px">0</i><i style="width:4px">.</i><i style="width:8px">4</i></div>
<svg class="abs" style="left:1155px;top:173px" width="12" height="7" viewBox="0 0 12 7"><path d="M0 0.5 L12 0.5 L6 6.5 Z" fill="#666"/></svg>
<div class=t style="left:1198px;top:166px;color:#666"><i style="width:8px">2</i><i style="width:8px">0</i><i style="width:8px">2</i><i style="width:8px">1</i><i style="width:5px">-</i><i style="width:8px">0</i><i style="width:8px">2</i><i style="width:5px">-</i><i style="width:8px">0</i><i style="width:8px">5</i></div>
<div class="abs" style="left:0;top:234px;width:1383px;height:1px;background:#e6e6e6"></div>
<div class=t style="left:16px;top:205px;color:#666"><i class=k>区</i><i class=k>域</i><i class=k>信</i><i class=k>息</i><i style="width:4px">&nbsp;</i><i style="width:8px">&gt;</i><i style="width:4px">&nbsp;</i><i class=k>教</i><i class=k>职</i><i class=k>工</i><i class=k>宿</i><i class=k>舍</i><i class=k>【</i><i class=k>高</i><i class=k>】</i><i style="width:4px">&nbsp;</i><i style="width:8px">&gt;</i><i style="width:4px">&nbsp;</i><i style="width:8px">1</i><i style="width:8px">1</i><i class=k>层</i></div>
<div class=t style="left:510px;top:205px;color:#666"><i class=k>套</i><i class=k>间</i><i style="width:8px">1</i><i style="width:8px">1</i><i style="width:8px">0</i><i style="width:8px">2</i></div>
<div class=t style="left:681px;top:205px;color:#666"><i class=k>刘</i><i class=k>红</i><i class=k>果</i></div>
<div class=t style="left:818px;top:205px;color:#666"><i style="width:8px">5</i><i style="width:8px">0</i><i style="width:8px">2</i><i style="width:8px">2</i><i style="width:8px">0</i><i style="width:8px">3</i><i style="width:8px">0</i><i style="width:8px">0</i><i style="width:8px">0</i><i style="width:8px">4</i><i style="width:8px">4</i><i style="width:8px">9</i></div>
<div class=t style="left:1058px;top:205px;color:#666"><i style="width:8px">0</i></div>
<svg class="abs" style="left:1155px;top:212px" width="12" height="7" viewBox="0 0 12 7"><path d="M0 0.5 L12 0.5 L6 6.5 Z" fill="#666"/></svg>
<div class=t style="left:1198px;top:205px;color:#666"><i style="width:8px">2</i><i style="width:8px">0</i><i style="width:8px">2</i><i style="width:8px">1</i><i style="width:5px">-</i><i style="width:8px">0</i><i style="width:8px">2</i><i style="width:5px">-</i><i style="width:8px">0</i><i style="width:8px">5</i></div>
<div class="abs" style="left:0;top:273px;width:1383px;height:1px;background:#e6e6e6"></div>
<div class=t style="left:16px;top:244px;color:#666"><i class=k>区</i><i class=k>域</i><i class=k>信</i><i class=k>息</i><i style="width:4px">&nbsp;</i><i style="width:8px">&gt;</i><i style="width:4px">&nbsp;</i><i class=k>教</i><i class=k>职</i><i class=k>工</i><i class=k>宿</i><i class=k>舍</i><i class=k>【</i><i class=k>高</i><i class=k>】</i><i style="width:4px">&nbsp;</i><i style="width:8px">&gt;</i><i style="width:4px">&nbsp;</i><i style="width:8px">9</i><i class=k>层</i></div>
<div class=t style="left:510px;top:244px;color:#666"><i class=k>套</i><i class=k>间</i><i style="width:8px">9</i><i style="width:8px">0</i><i style="width:8px">4</i></div>
<div class=t style="left:681px;top:244px;color:#666"><i style="width:5px">-</i></div>
<div class=t style="left:818px;top:244px;color:#666"><i style="width:8px">5</i><i style="width:8px">0</i><i style="width:8px">2</i><i style="width:8px">2</i><i style="width:8px">0</i><i style="width:8px">3</i><i style="width:8px">0</i><i style="width:8px">0</i><i style="width:8px">0</i><i style="width:8px">3</i><i style="width:8px">2</i><i style="width:8px">7</i></div>
<div class=t style="left:1058px;top:244px;color:#666"><i style="width:8px">0</i></div>
<svg class="abs" style="left:1155px;top:251px" width="12" height="7" viewBox="0 0 12 7"><path d="M0 0.5 L12 0.5 L6 6.5 Z" fill="#666"/></svg>
<div class=t style="left:1198px;top:244px;color:#666"><i style="width:8px">2</i><i style="width:8px">0</i><i style="width:8px">2</i><i style="width:8px">1</i><i style="width:5px">-</i><i style="width:8px">0</i><i style="width:8px">2</i><i style="width:5px">-</i><i style="width:8px">0</i><i style="width:8px">5</i></div>
<div class="abs" style="left:0;top:312px;width:1383px;height:1px;background:#e6e6e6"></div>
<div class=t style="left:16px;top:283px;color:#666"><i class=k>区</i><i class=k>域</i><i class=k>信</i><i class=k>息</i><i style="width:4px">&nbsp;</i><i style="width:8px">&gt;</i><i style="width:4px">&nbsp;</i><i class=k>教</i><i class=k>职</i><i class=k>工</i><i class=k>宿</i><i class=k>舍</i><i class=k>【</i><i class=k>高</i><i class=k>】</i><i style="width:4px">&nbsp;</i><i style="width:8px">&gt;</i><i style="width:4px">&nbsp;</i><i style="width:8px">9</i><i class=k>层</i></div>
<div class=t style="left:510px;top:283px;color:#666"><i class=k>套</i><i class=k>间</i><i style="width:8px">9</i><i style="width:8px">0</i><i style="width:8px">1</i></div>
<div class=t style="left:681px;top:283px;color:#666"><i style="width:5px">-</i></div>
<div class=t style="left:818px;top:283px;color:#666"><i style="width:8px">5</i><i style="width:8px">0</i><i style="width:8px">2</i><i style="width:8px">2</i><i style="width:8px">0</i><i style="width:8px">3</i><i style="width:8px">0</i><i style="width:8px">0</i><i style="width:8px">0</i><i style="width:8px">3</i><i style="width:8px">3</i><i style="width:8px">1</i></div>
<div class=t style="left:1058px;top:283px;color:#666"><i style="width:8px">0</i><i style="width:4px">.</i><i style="width:8px">0</i><i style="width:8px">3</i></div>
<svg class="abs" style="left:1155px;top:290px" width="12" height="7" viewBox="0 0 12 7"><path d="M0 0.5 L12 0.5 L6 6.5 Z" fill="#666"/></svg>
<div class=t style="left:1198px;top:283px;color:#666"><i style="width:8px">2</i><i style="width:8px">0</i><i style="width:8px">2</i><i style="width:8px">1</i><i style="width:5px">-</i><i style="width:8px">0</i><i style="width:8px">2</i><i style="width:5px">-</i><i style="width:8px">0</i><i style="width:8px">5</i></div>
<div class="abs" style="left:0;top:351px;width:1383px;height:1px;background:#e6e6e6"></div>
<div class=t style="left:16px;top:322px;color:#666"><i class=k>区</i><i class=k>域</i><i class=k>信</i><i class=k>息</i><i style="width:4px">&nbsp;</i><i style="width:8px">&gt;</i><i style="width:4px">&nbsp;</i><i class=k>教</i><i class=k>职</i><i class=k>工</i><i class=k>宿</i><i class=k>舍</i><i class=k>【</i><i class=k>高</i><i class=k>】</i><i style="width:4px">&nbsp;</i><i style="width:8px">&gt;</i><i style="width:4px">&nbsp;</i><i style="width:8px">9</i><i class=k>层</i></div>
<div class=t style="left:510px;top:322px;color:#666"><i class=k>套</i><i class=k>间</i><i style="width:8px">9</i><i style="width:8px">0</i><i style="width:8px">2</i></div>
<div class=t style="left:681px;top:322px;color:#666"><i style="width:5px">-</i></div>
<div class=t style="left:818px;top:322px;color:#666"><i style="width:8px">5</i><i style="width:8px">0</i><i style="width:8px">2</i><i style="width:8px">2</i><i style="width:8px">0</i><i style="width:8px">3</i><i style="width:8px">0</i><i style="width:8px">0</i><i style="width:8px">0</i><i style="width:8px">3</i><i style="width:8px">2</i><i style="width:8px">6</i></div>
<div class=t style="left:1058px;top:322px;color:#666"><i style="width:8px">0</i><i style="width:4px">.</i><i style="width:8px">0</i><i style="width:8px">4</i></div>
<svg class="abs" style="left:1155px;top:329px" width="12" height="7" viewBox="0 0 12 7"><path d="M0 0.5 L12 0.5 L6 6.5 Z" fill="#666"/></svg>
<div class=t style="left:1198px;top:322px;color:#666"><i style="width:8px">2</i><i style="width:8px">0</i><i style="width:8px">2</i><i style="width:8px">1</i><i style="width:5px">-</i><i style="width:8px">0</i><i style="width:8px">2</i><i style="width:5px">-</i><i style="width:8px">0</i><i style="width:8px">5</i></div>
<div class="abs" style="left:0;top:390px;width:1383px;height:1px;background:#e6e6e6"></div>
<div class=t style="left:16px;top:361px;color:#666"><i class=k>区</i><i class=k>域</i><i class=k>信</i><i class=k>息</i><i style="width:4px">&nbsp;</i><i style="width:8px">&gt;</i><i style="width:4px">&nbsp;</i><i class=k>教</i><i class=k>职</i><i class=k>工</i><i class=k>宿</i><i class=k>舍</i><i class=k>【</i><i class=k>高</i><i class=k>】</i><i style="width:4px">&nbsp;</i><i style="width:8px">&gt;</i><i style="width:4px">&nbsp;</i><i style="width:8px">8</i><i class=k>层</i></div>
<div class=t style="left:510px;top:361px;color:#666"><i class=k>套</i><i class=k>间</i><i style="width:8px">8</i><i style="width:8px">0</i><i style="width:8px">1</i></div>
<div class=t style="left:681px;top:361px;color:#666"><i class=k>李</i><i class=k>洁</i><i class=k>如</i></div>
<div class=t style="left:818px;top:361px;color:#666"><i style="width:8px">5</i><i style="width:8px">0</i><i style="width:8px">2</i><i style="width:8px">2</i><i style="width:8px">0</i><i style="width:8px">3</i><i style="width:8px">0</i><i style="width:8px">0</i><i style="width:8px">0</i><i style="width:8px">3</i><i style="width:8px">3</i><i style="width:8px">4</i></div>
<div class=t style="left:1058px;top:361px;color:#666"><i style="width:8px">0</i><i style="width:4px">.</i><i style="width:8px">0</i><i style="width:8px">3</i></div>
<svg class="abs" style="left:1155px;top:368px" width="12" height="7" viewBox="0 0 12 7"><path d="M0 0.5 L12 0.5 L6 6.5 Z" fill="#666"/></svg>
<div class=t style="left:1198px;top:361px;color:#666"><i style="width:8px">2</i><i style="width:8px">0</i><i style="width:8px">2</i><i style="width:8px">1</i><i style="width:5px">-</i><i style="width:8px">0</i><i style="width:8px">2</i><i style="width:5px">-</i><i style="width:8px">0</i><i style="width:8px">5</i></div>
<div class="abs" style="left:0;top:429px;width:1383px;height:1px;background:#e6e6e6"></div>
<div class=t style="left:16px;top:400px;color:#666"><i class=k>区</i><i class=k>域</i><i class=k>信</i><i class=k>息</i><i style="width:4px">&nbsp;</i><i style="width:8px">&gt;</i><i style="width:4px">&nbsp;</i><i class=k>教</i><i class=k>职</i><i class=k>工</i><i class=k>宿</i><i class=k>舍</i><i class=k>【</i><i class=k>高</i><i class=k>】</i><i style="width:4px">&nbsp;</i><i style="width:8px">&gt;</i><i style="width:4px">&nbsp;</i><i style="width:8px">8</i><i class=k>层</i></div>
<div class=t style="left:510px;top:400px;color:#666"><i class=k>套</i><i class=k>间</i><i style="width:8px">8</i><i style="width:8px">0</i><i style="width:8px">2</i></div>
<div class=t style="left:681px;top:400px;color:#666"><i class=k>张</i><i class=k>海</i><i class=k>艳</i></div>
<div class=t style="left:818px;top:400px;color:#666"><i style="width:8px">5</i><i style="width:8px">0</i><i style="width:8px">2</i><i style="width:8px">2</i><i style="width:8px">0</i><i style="width:8px">3</i><i style="width:8px">0</i><i style="width:8px">0</i><i style="width:8px">0</i><i style="width:8px">3</i><i style="width:8px">9</i><i style="width:8px">6</i></div>
<div class=t style="left:1058px;top:400px;color:#666"><i style="width:8px">0</i><i style="width:4px">.</i><i style="width:8px">2</i><i style="width:8px">1</i></div>
<svg class="abs" style="left:1155px;top:407px" width="12" height="7" viewBox="0 0 12 7"><path d="M0 0.5 L12 0.5 L6 6.5 Z" fill="#666"/></svg>
<div class=t style="left:1198px;top:400px;color:#666"><i style="width:8px">2</i><i style="width:8px">0</i><i style="width:8px">2</i><i style="width:8px">1</i><i style="width:5px">-</i><i style="width:8px">0</i><i style="width:8px">2</i><i style="width:5px">-</i><i style="width:8px">0</i><i style="width:8px">5</i></div>
<div class="abs" style="left:0;top:468px;width:1383px;height:1px;background:#e6e6e6"></div>
<div class=t style="left:16px;top:439px;color:#666"><i class=k>区</i><i class=k>域</i><i class=k>信</i><i class=k>息</i><i style="width:4px">&nbsp;</i><i style="width:8px">&gt;</i><i style="width:4px">&nbsp;</i><i class=k>教</i><i class=k>职</i><i class=k>工</i><i class=k>宿</i><i class=k>舍</i><i class=k>【</i><i class=k>高</i><i class=k>】</i><i style="width:4px">&nbsp;</i><i style="width:8px">&gt;</i><i style="width:4px">&nbsp;</i><i style="width:8px">6</i><i class=k>层</i></div>
<div class=t style="left:510px;top:439px;color:#666"><i class=k>套</i><i class=k>间</i><i style="width:8px">6</i><i style="width:8px">0</i><i style="width:8px">2</i></div>
<div class=t style="left:681px;top:439px;color:#666"><i class=k>陈</i><i class=k>莎</i></div>
<div class=t style="left:818px;top:439px;color:#666"><i style="width:8px">5</i><i style="width:8px">0</i><i style="width:8px">2</i><i style="width:8px">2</i><i style="width:8px">0</i><i style="width:8px">3</i><i style="width:8px">0</i><i style="width:8px">0</i><i style="width:8px">0</i><i style="width:8px">4</i><i style="width:8px">7</i><i style="width:8px">7</i></div>
<div class=t style="left:1058px;top:439px;color:#666"><i style="width:8px">0</i><i style="width:4px">.</i><i style="width:8px">0</i><i style="width:8px">4</i></div>
<svg class="abs" style="left:1155px;top:446px" width="12" height="7" viewBox="0 0 12 7"><path d="M0 0.5 L12 0.5 L6 6.5 Z" fill="#666"/></svg>
<div class=t style="left:1198px;top:439px;color:#666"><i style="width:8px">2</i><i style="width:8px">0</i><i style="width:8px">2</i><i style="width:8px">1</i><i style="width:5px">-</i><i style="width:8px">0</i><i style="width:8px">2</i><i style="width:5px">-</i><i style="width:8px">0</i><i style="width:8px">5</i></div>
<div class="abs" style="left:0;top:507px;width:1383px;height:1px;background:#e6e6e6"></div>
<div class=t style="left:16px;top:478px;color:#666"><i class=k>区</i><i class=k>域</i><i class=k>信</i><i class=k>息</i><i style="width:4px">&nbsp;</i><i style="width:8px">&gt;</i><i style="width:4px">&nbsp;</i><i class=k>教</i><i class=k>职</i><i class=k>工</i><i class=k>宿</i><i class=k>舍</i><i class=k>【</i><i class=k>高</i><i class=k>】</i><i style="width:4px">&nbsp;</i><i style="width:8px">&gt;</i><i style="width:4px">&nbsp;</i><i style="width:8px">5</i><i class=k>层</i></div>
<div class=t style="left:510px;top:478px;color:#666"><i class=k>套</i><i class=k>间</i><i style="width:8px">5</i><i style="width:8px">0</i><i style="width:8px">1</i></div>
<div class=t style="left:681px;top:478px;color:#666"><i class=k>刘</i><i class=k>珊</i><i class=k>珊</i></div>
<div class=t style="left:818px;top:478px;color:#666"><i style="width:8px">5</i><i style="width:8px">0</i><i style="width:8px">2</i><i style="width:8px">2</i><i style="width:8px">0</i><i style="width:8px">3</i><i style="width:8px">0</i><i style="width:8px">0</i><i style="width:8px">0</i><i style="width:8px">2</i><i style="width:8px">6</i><i style="width:8px">9</i></div>
<div class=t style="left:1058px;top:478px;color:#666"><i style="width:8px">0</i><i style="width:4px">.</i><i style="width:8px">5</i></div>
<svg class="abs" style="left:1155px;top:485px" width="12" height="7" viewBox="0 0 12 7"><path d="M0 0.5 L12 0.5 L6 6.5 Z" fill="#666"/></svg>
<div class=t style="left:1198px;top:478px;color:#666"><i style="width:8px">2</i><i style="width:8px">0</i><i style="width:8px">2</i><i style="width:8px">1</i><i style="width:5px">-</i><i style="width:8px">0</i><i style="width:8px">2</i><i style="width:5px">-</i><i style="width:8px">0</i><i style="width:8px">5</i></div>
<div class="abs" style="left:0;top:546px;width:1383px;height:1px;background:#e6e6e6"></div>
<div class=t style="left:16px;top:517px;color:#666"><i class=k>区</i><i class=k>域</i><i class=k>信</i><i class=k>息</i><i style="width:4px">&nbsp;</i><i style="width:8px">&gt;</i><i style="width:4px">&nbsp;</i><i class=k>教</i><i class=k>职</i><i class=k>工</i><i class=k>宿</i><i class=k>舍</i><i class=k>【</i><i class=k>高</i><i class=k>】</i><i style="width:4px">&nbsp;</i><i style="width:8px">&gt;</i><i style="width:4px">&nbsp;</i><i style="width:8px">5</i><i class=k>层</i></div>
<div class=t style="left:510px;top:517px;color:#666"><i class=k>套</i><i class=k>间</i><i style="width:8px">5</i><i style="width:8px">0</i><i style="width:8px">2</i></div>
<div class=t style="left:681px;top:517px;color:#666"><i class=k>李</i><i class=k>俊</i><i class=k>华</i></div>
<div class=t style="left:818px;top:517px;color:#666"><i style="width:8px">5</i><i style="width:8px">0</i><i style="width:8px">2</i><i style="width:8px">2</i><i style="width:8px">0</i><i style="width:8px">3</i><i style="width:8px">0</i><i style="width:8px">0</i><i style="width:8px">0</i><i style="width:8px">2</i><i style="width:8px">6</i><i style="width:8px">7</i></div>
<div class=t style="left:1058px;top:517px;color:#666"><i style="width:8px">0</i></div>
<svg class="abs" style="left:1155px;top:524px" width="12" height="7" viewBox="0 0 12 7"><path d="M0 0.5 L12 0.5 L6 6.5 Z" fill="#666"/></svg>
<div class=t style="left:1198px;top:517px;color:#666"><i style="width:8px">2</i><i style="width:8px">0</i><i style="width:8px">2</i><i style="width:8px">1</i><i style="width:5px">-</i><i style="width:8px">0</i><i style="width:8px">2</i><i style="width:5px">-</i><i style="width:8px">0</i><i style="width:8px">5</i></div>
<div class="abs" style="left:0;top:585px;width:1383px;height:1px;background:#e6e6e6"></div>
<div class=t style="left:16px;top:556px;color:#666"><i class=k>区</i><i class=k>域</i><i class=k>信</i><i class=k>息</i><i style="width:4px">&nbsp;</i><i style="width:8px">&gt;</i><i style="width:4px">&nbsp;</i><i class=k>教</i><i class=k>职</i><i class=k>工</i><i class=k>宿</i><i class=k>舍</i><i class=k>【</i><i class=k>高</i><i class=k>】</i><i style="width:4px">&nbsp;</i><i style="width:8px">&gt;</i><i style="width:4px">&nbsp;</i><i style="width:8px">4</i><i class=k>层</i></div>
<div class=t style="left:510px;top:556px;color:#666"><i class=k>套</i><i class=k>间</i><i style="width:8px">4</i><i style="width:8px">0</i><i style="width:8px">1</i></div>
<div class=t style="left:681px;top:556px;color:#666"><i class=k>易</i><i class=k>喜</i><i class=k>淼</i></div>
<div class=t style="left:818px;top:556px;color:#666"><i style="width:8px">5</i><i style="width:8px">0</i><i style="width:8px">2</i><i style="width:8px">2</i><i style="width:8px">0</i><i style="width:8px">3</i><i style="width:8px">0</i><i style="width:8px">0</i><i style="width:8px">0</i><i style="width:8px">4</i><i style="width:8px">7</i><i style="width:8px">8</i></div>
<div class=t style="left:1058px;top:556px;color:#666"><i style="width:8px">0</i><i style="width:4px">.</i><i style="width:8px">0</i><i style="width:8px">3</i></div>
<svg class="abs" style="left:1155px;top:563px" width="12" height="7" viewBox="0 0 12 7"><path d="M0 0.5 L12 0.5 L6 6.5 Z" fill="#666"/></svg>
<div class=t style="left:1198px;top:556px;color:#666"><i style="width:8px">2</i><i style="width:8px">0</i><i style="width:8px">2</i><i style="width:8px">1</i><i style="width:5px">-</i><i style="width:8px">0</i><i style="width:8px">2</i><i style="width:5px">-</i><i style="width:8px">0</i><i style="width:8px">5</i></div>
<div class="abs" style="left:0;top:624px;width:1383px;height:1px;background:#e6e6e6"></div>
<div class=t style="left:16px;top:595px;color:#666"><i class=k>区</i><i class=k>域</i><i class=k>信</i><i class=k>息</i><i style="width:4px">&nbsp;</i><i style="width:8px">&gt;</i><i style="width:4px">&nbsp;</i><i class=k>教</i><i class=k>职</i><i class=k>工</i><i class=k>宿</i><i class=k>舍</i><i class=k>【</i><i class=k>高</i><i class=k>】</i><i style="width:4px">&nbsp;</i><i style="width:8px">&gt;</i><i style="width:4px">&nbsp;</i><i style="width:8px">4</i><i class=k>层</i></div>
<div class=t style="left:510px;top:595px;color:#666"><i class=k>套</i><i class=k>间</i><i style="width:8px">4</i><i style="width:8px">0</i><i style="width:8px">2</i></div>
<div class=t style="left:681px;top:595px;color:#666"><i class=k>李</i><i class=k>才</i><i class=k>志</i></div>
<div class=t style="left:818px;top:595px;color:#666"><i style="width:8px">5</i><i style="width:8px">0</i><i style="width:8px">2</i><i style="width:8px">2</i><i style="width:8px">0</i><i style="width:8px">3</i><i style="width:8px">0</i><i style="width:8px">0</i><i style="width:8px">0</i><i style="width:8px">4</i><i style="width:8px">7</i><i style="width:8px">4</i></div>
<div class=t style="left:1058px;top:595px;color:#666"><i style="width:8px">0</i><i style="width:4px">.</i><i style="width:8px">0</i><i style="width:8px">4</i></div>
<svg class="abs" style="left:1155px;top:602px" width="12" height="7" viewBox="0 0 12 7"><path d="M0 0.5 L12 0.5 L6 6.5 Z" fill="#666"/></svg>
<div class=t style="left:1198px;top:595px;color:#666"><i style="width:8px">2</i><i style="width:8px">0</i><i style="width:8px">2</i><i style="width:8px">1</i><i style="width:5px">-</i><i style="width:8px">0</i><i style="width:8px">2</i><i style="width:5px">-</i><i style="width:8px">0</i><i style="width:8px">5</i></div>
<div class="abs" style="left:0;top:0;width:1px;height:632px;background:#e6e6e6"></div>
<div class="abs" style="left:1382px;top:0;width:1px;height:632px;background:#e2e2e2"></div>
<div class="sb" style="left:1384px;top:0;width:16px;height:632px"></div>
<div class="thumb" style="left:1384px;top:17px;width:15px;height:454px"></div>
<svg class="abs" style="left:1387.8px;top:5.8px" width="8" height="7" viewBox="0 0 8 7"><path d="M0 3.7 L3.6 0 L7.2 3.7 L7.2 6.2 L3.6 2.6 L0 6.2 Z" fill="#505050"/></svg>
<svg class="abs" style="left:1387.8px;top:621.4px" width="8" height="7" viewBox="0 0 8 7"><path d="M0 0 L3.6 3.6 L7.2 0 L7.2 2.5 L3.6 6.2 L0 2.5 Z" fill="#505050"/></svg>
</div>
<div class="pg" style="left:807px;width:67px"></div>
<div class=t style="left:823px;top:894px;font-size:12px;color:#d2d2d2"><i class=k>上</i><i class=k>一</i><i class=k>页</i></div>
<div class="abs" style="left:874px;top:889px;width:39px;height:30px;background:#1E9FFF;border-radius:2px;z-index:2"></div>
<div class=t style="left:890px;top:894px;font-size:12px;color:#fff;z-index:3"><i style="width:7px">1</i></div>
<div class="pg" style="left:912px;width:39px"></div>
<div class=t style="left:928px;top:894px;font-size:12px;color:#333"><i style="width:7px">2</i></div>
<div class="pg" style="left:950px;width:39px"></div>
<div class=t style="left:966px;top:894px;font-size:12px;color:#333"><i style="width:7px">3</i></div>
<div class="pg" style="left:988px;width:39px"></div>
<div class=t style="left:1004px;top:894px;font-size:12px;color:#333"><i style="width:7px">4</i></div>
<div class="pg" style="left:1026px;width:39px"></div>
<div class=t style="left:1042px;top:894px;font-size:12px;color:#333"><i style="width:7px">5</i></div>
<div class="pg" style="left:1064px;width:44px"></div>
<div class=t style="left:1080px;top:894px;font-size:12px;color:#999"><i class=k>…</i></div>
<div class="pg" style="left:1107px;width:46px"></div>
<div class=t style="left:1123px;top:894px;font-size:12px;color:#333"><i style="width:7px">1</i><i style="width:7px">3</i></div>
<div class="pg" style="left:1152px;width:68px"></div>
<div class=t style="left:1168px;top:894px;font-size:12px;color:#333"><i class=k>下</i><i class=k>一</i><i class=k>页</i></div>
<div class=t style="left:1228px;top:894px;font-size:12px"><i class=k>共</i><i style="width:3px">&nbsp;</i><i style="width:7px">2</i><i style="width:7px">5</i><i style="width:7px">2</i><i style="width:3px">&nbsp;</i><i class=k>条</i></div>
<div class="abs" style="left:1300px;top:889px;width:84px;height:30px;border:1px solid #e2e2e2;border-radius:2px;background:#fff"></div>
<div class=t style="left:1308px;top:894px;font-size:12px;color:#000"><i style="width:7px">2</i><i style="width:7px">0</i><i style="width:3px">&nbsp;</i><i class=k>条</i><i style="width:3px">/</i><i class=k>页</i></div>
<div class="abs" style="left:1366px;top:890px;width:17px;height:28px;background:#dddddd;border:1px solid #adadad"></div>
<svg class="abs" style="left:1369px;top:901px" width="10" height="6" viewBox="0 0 10 6"><path d="M1 1 L5 5 L9 1" fill="none" stroke="#555" stroke-width="1"/></svg>
<svg class="abs" style="left:1403px;top:893px" width="20" height="20" viewBox="0 0 20 20"><path d="M15.44 4.8 A7.5 7.5 0 1 0 16.8 9.8" fill="none" stroke="#333" stroke-width="1.25"/><path d="M17 2 L17 6.5 L12.1 6.5" fill="none" stroke="#333" stroke-width="1.25"/></svg>
<div class=t style="left:1441px;top:894px;font-size:12px;color:#999"><i class=k>到</i><i class=k>第</i></div>
<div class="abs" style="left:1476px;top:889px;width:40px;height:30px;border:1px solid #e2e2e2;border-radius:2px;background:#fff"></div>
<div class=t style="left:1493px;top:894px;font-size:12px"><i style="width:7px">1</i></div>
<div class=t style="left:1525px;top:894px;font-size:12px;color:#999"><i class=k>页</i></div>
<div class="abs" style="left:1548px;top:889px;width:46px;height:30px;border:1px solid #e2e2e2;border-radius:2px;background:#fff"></div>
<div class=t style="left:1559px;top:895px;font-size:12px;color:#000;font-weight:bold"><i class=k>确</i><i class=k>定</i></div></body></html>
